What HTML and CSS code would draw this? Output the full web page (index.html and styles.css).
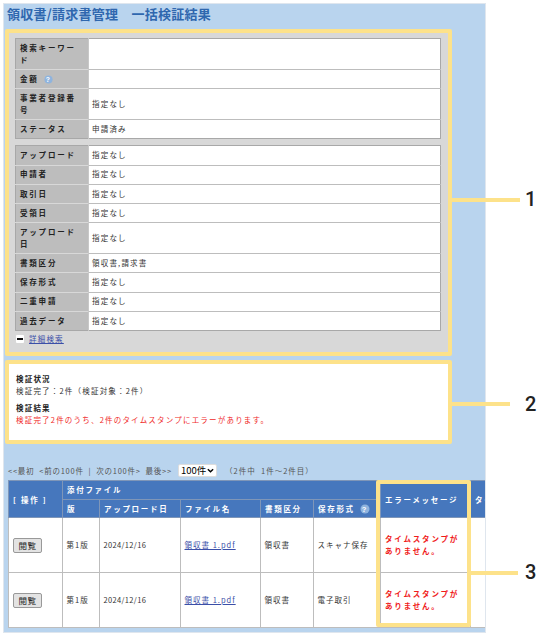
FILE: index.html
```html
<!DOCTYPE html>
<html lang="ja">
<head>
<meta charset="utf-8">
<title>一括検証結果</title>
<link rel="stylesheet" href="styles.css">
</head>
<body>
<div class="stage">
  <main class="panel">
    <h1 class="title">領収書/請求書管理　一括検証結果</h1>
    <section class="box search">
      <table class="cond">
        <tr class="tall"><th>検索キーワード</th><td></td></tr>
        <tr><th>金額 <svg class="help" viewBox="0 0 10 10"><circle cx="5" cy="5" r="4.5" fill="#8fb4de"/><text x="5" y="7.6" text-anchor="middle" class="help-q">?</text></svg></th><td></td></tr>
        <tr class="tall"><th>事業者登録番号</th><td>指定なし</td></tr>
        <tr><th>ステータス</th><td>申請済み</td></tr>
      </table>
      <table class="cond">
        <tr><th>アップロード</th><td>指定なし</td></tr>
        <tr><th>申請者</th><td>指定なし</td></tr>
        <tr><th>取引日</th><td>指定なし</td></tr>
        <tr><th>受領日</th><td>指定なし</td></tr>
        <tr class="tall"><th>アップロード日</th><td>指定なし</td></tr>
        <tr><th>書類区分</th><td>領収書,請求書</td></tr>
        <tr><th>保存形式</th><td>指定なし</td></tr>
        <tr><th>二重申請</th><td>指定なし</td></tr>
        <tr><th>過去データ</th><td>指定なし</td></tr>
      </table>
      <div class="detail"><span class="minus"></span><a href="#">詳細検索</a></div>
    </section>
    <section class="box status">
      <h2>検証状況</h2>
      <p>検証完了：2件（検証対象：2件）</p>
      <h2 class="second">検証結果</h2>
      <p class="err">検証完了2件のうち、2件のタイムスタンプにエラーがあります。</p>
    </section>
    <div class="pager">
      <span class="links">&lt;&lt;最初 &lt;前の100件 | 次の100件&gt; 最後&gt;&gt;</span>
      <span class="size-wrap">
        <select class="size"><option>100件</option></select>
        <svg class="chev" viewBox="0 0 8 5"><path d="M1 1l3 3 3-3" fill="none" stroke="#000" stroke-width="1.6"/></svg>
      </span>
      <span>（2件中 &nbsp;1件～2件目）</span>
    </div>
    <div class="results-wrap">
      <table class="results">
        <colgroup><col class="c1"><col class="c2"><col class="c3"><col class="c4"><col class="c5"><col class="c6"><col class="c7"><col class="c8"></colgroup>
        <tr class="h1">
          <th rowspan="2">[ 操作 ]</th>
          <th colspan="5">添付ファイル</th>
          <th rowspan="2">エラーメッセージ</th>
          <th rowspan="2">タイムスタンプ</th>
        </tr>
        <tr class="h2">
          <th>版</th><th>アップロード日</th><th>ファイル名</th><th>書類区分</th>
          <th>保存形式 <svg class="help big" viewBox="0 0 10 10"><circle cx="5" cy="5" r="4.5" fill="#8fb4de"/><text x="5" y="7.6" text-anchor="middle" class="help-q">?</text></svg></th>
        </tr>
        <tr class="row">
          <td><button class="view" type="button">閲覧</button></td>
          <td>第1版</td><td class="date">2024/12/16</td><td><a href="#">領収書 1.pdf</a></td><td>領収書</td><td>スキャナ保存</td>
          <td class="msg">タイムスタンプがありません。</td><td></td>
        </tr>
        <tr class="row">
          <td><button class="view" type="button">閲覧</button></td>
          <td>第1版</td><td class="date">2024/12/16</td><td><a href="#">領収書 1.pdf</a></td><td>領収書</td><td>電子取引</td>
          <td class="msg">タイムスタンプがありません。</td><td></td>
        </tr>
      </table>
    </div>
  </main>
  <div class="col-mark"></div>
  <div class="leader l1"></div><span class="num n1">1</span>
  <div class="leader l2"></div><span class="num n2">2</span>
  <div class="leader l3"></div><span class="num n3">3</span>
</div>
</body>
</html>
```
FILE: styles.css
```css
* { box-sizing: border-box; }
html, body { margin: 0; padding: 0; background: #fff; }
body { font-family: "Noto Sans CJK JP", "Liberation Sans", sans-serif; color: #333; }
.stage { position: relative; width: 547px; height: 636px; padding: 3px 0 0 3px; overflow: hidden; }
.panel {
  width: 482.5px; height: 630px; background: #b9d4ee; border: 1px solid #dfe6ee;
  overflow: hidden; display: flex; flex-direction: column;
}
.title {
  margin: 0; height: 25px; padding: 0 0 0 3px; font-size: 13px; line-height: 19px; font-weight: 700;
  color: #2f67ae; letter-spacing: 0.25px;
}
.box { width: 447px; margin-left: 1px; border: 4px solid #fde28a; border-radius: 2px; }
.search { height: 327px; background: #d8d8d8; padding: 5px 7px 0 6px; }
.status { height: 84px; margin-top: 4px; background: #fff; padding: 9px 0 0 7px; }
.cond { width: 426px; border-collapse: collapse; table-layout: fixed; background: #fff; margin-bottom: 6px; border: 1px solid #a8a8a8; }
.cond th, .cond td { border-top: 1px solid #bdbdbd; height: 19.2px; padding: 0 3px; font-size: 7.5px; line-height: 12.5px; letter-spacing: 1.2px; text-align: left; }
.cond tr:first-child th, .cond tr:first-child td { border-top: 0; }
.cond th { width: 73px; background: #bdbdbd; color: #222; font-weight: 700; padding: 0 5px 0 4px; letter-spacing: 1.8px; border-right: 1px solid #c8c8c8; border-top-color: #d8d8d8; }
.cond tr.tall th, .cond tr.tall td { height: 31px; }
.help { width: 9px; height: 9px; vertical-align: -2px; margin-left: 2px; }
.help.big { width: 10px; height: 10px; }
.help-q { font: 700 7.5px "Liberation Sans", sans-serif; fill: #fff; }
.detail { display: flex; align-items: center; gap: 5px; margin: -4px 0 0 1px; height: 12px; font-size: 7.5px; letter-spacing: 1.2px; }
.detail a, .results a { color: #3b4fa8; text-decoration: underline; }
.minus { position: relative; width: 8px; height: 8px; background: #fff; border-radius: 1px; }
.minus::after { content: ""; position: absolute; left: 1px; right: 1px; top: 3px; height: 2px; background: #111; }
.status h2 { margin: 0; font-size: 7.5px; line-height: 12px; letter-spacing: 1.2px; font-weight: 700; color: #222; }
.status p { margin: 0; font-size: 7.5px; line-height: 12px; letter-spacing: 1.2px; }
.status .second { margin-top: 5px; }
.status .err { color: #f02a2a; }
.pager { display: flex; align-items: center; gap: 8px; height: 14px; margin-top: 19px; padding-left: 4px; font-size: 7.5px; letter-spacing: 1px; color: #555; white-space: nowrap; }
.links { flex: none; width: 162px; word-spacing: 2.5px; letter-spacing: 0.75px; }
.size-wrap { position: relative; display: block; width: 39px; height: 13px; }
.size { appearance: none; display: block; width: 39px; height: 13px; padding: 0 0 0 2px; border: 1px solid #ddd; border-radius: 2px; background: #fff; font: 9.5px/11px "Noto Sans CJK JP", sans-serif; color: #000; }
.chev { position: absolute; right: 3px; top: 4.5px; width: 7px; height: 5px; }
.results-wrap { margin: 3px 0 0 4px; }
.results { width: 540px; table-layout: fixed; border-collapse: collapse; background: #fff; }
.c1 { width: 54px; } .c2 { width: 37px; } .c3 { width: 81px; } .c4 { width: 80px; } .c5 { width: 53px; } .c6 { width: 67px; } .c7 { width: 90px; } .c8 { width: 78px; }
.results th { background: #4677bd; color: #fff; border: 1px solid #7f96b8; font-size: 7.5px; letter-spacing: 1.7px; font-weight: 700; text-align: left; padding: 0 4px; white-space: nowrap; overflow: hidden; }
.results td { border: 1px solid #bdbdbd; font-size: 7.5px; letter-spacing: 1px; line-height: 12.5px; padding: 0 3.5px; }
.h1 th { height: 18.5px; }
.h2 th { height: 18.5px; }
.row td { height: 55px; }
.results td.date { letter-spacing: 0.35px; }
.view { display: block; width: 29px; height: 15px; margin-left: 0.5px; padding: 0; background: #e3e3e3; border: 1px solid #999; border-radius: 2px; font: 8.5px/13px "Noto Sans CJK JP", sans-serif; color: #222; letter-spacing: 0.4px; }
.results td.msg { color: #f01c1c; font-weight: 700; letter-spacing: 1.8px; padding: 0 8px 0 4px; }
.col-mark { position: absolute; left: 376px; top: 480px; width: 95px; height: 147px; border: 4px solid #fde28a; border-radius: 2px; }
.leader { position: absolute; background: #fde28a; height: 4px; }
.l1 { left: 452px; top: 198px; width: 68px; }
.l2 { left: 452px; top: 402px; width: 58px; }
.l3 { left: 471px; top: 571px; width: 47px; }
.num { position: absolute; left: 525px; font: 500 20px/20px Roboto, "Liberation Sans", sans-serif; color: #222; }
.n1 { top: 189px; } .n2 { top: 394px; } .n3 { top: 562px; }
```
